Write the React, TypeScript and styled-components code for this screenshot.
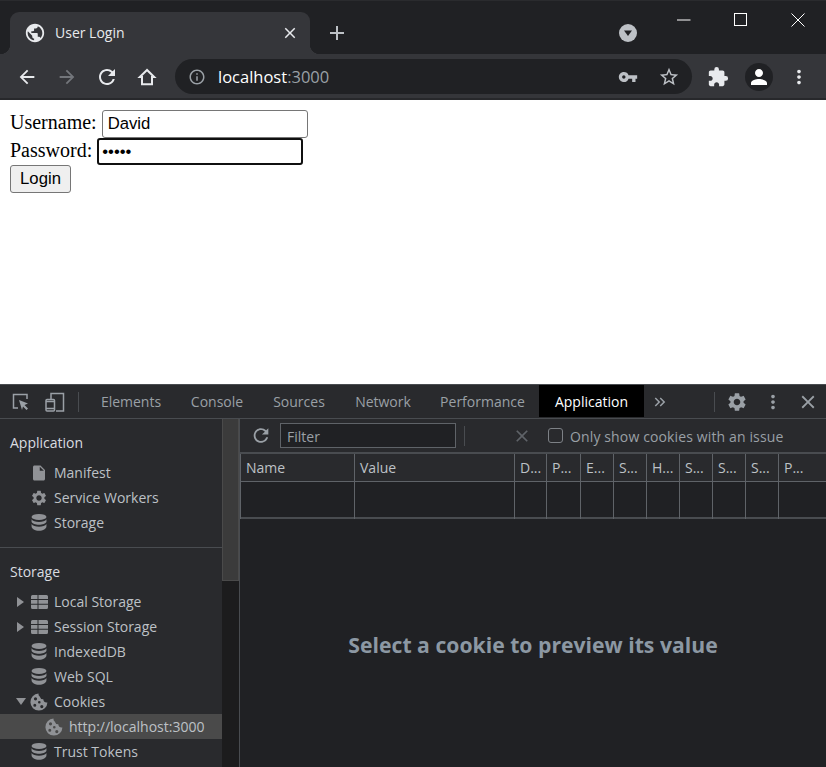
import React from "react";
import styled, { createGlobalStyle } from "styled-components";
import {
  MdArrowBack, MdArrowForward, MdRefresh, MdInfoOutline, MdVpnKey, MdStarBorder,
  MdExtension, MdPerson, MdMoreVert, MdClose, MdAdd, MdPublic, MdSettings, MdInsertDriveFile,
  MdKeyboardDoubleArrowRight,
} from "react-icons/md";

const UI = `"Open Sans", "Noto Sans", sans-serif`;

const Global = createGlobalStyle`
  html, body { margin: 0; padding: 0; height: 100%; overflow: hidden; background: #fff; }
  * { box-sizing: border-box; }
`;

const Shell = styled.div`display: flex; flex-direction: column; width: 826px; height: 767px; overflow: hidden;`;

/* Browser chrome */
const TabStrip = styled.div`display: flex; align-items: flex-end; height: 54px; padding-left: 10px; background: #202124; border-top: 1px solid #2a2b2e;`;
const Tab = styled.div`
  position: relative; display: flex; flex: none; align-items: center; width: 300px; height: 42px; padding: 0 11px 0 14px;
  background: #35363a; border-radius: 9px 9px 0 0; color: #e8eaed; font: 14px ${UI};
  &::before, &::after { content: ""; position: absolute; bottom: 0; width: 10px; height: 10px; }
  &::before { left: -10px; background: radial-gradient(circle at 0 0, transparent 10px, #35363a 10.5px); }
  &::after { right: -10px; background: radial-gradient(circle at 100% 0, transparent 10px, #35363a 10.5px); }
`;
const TabTitle = styled.span`flex: 1; margin-left: 9px; margin-bottom: 1px;`;
const StripButton = styled.div`display: flex; flex: none; align-items: center; justify-content: center; height: 42px; width: ${p => p.$w}px; margin-left: ${p => p.$ml || 0}px; color: ${p => p.$c || "#bdc1c6"};`;
const WindowControls = styled.div`display: flex; flex: none; align-self: flex-start; margin-left: 9px; height: 38px;`;
const WindowButton = styled.div`display: flex; align-items: center; justify-content: center; width: 57px; height: 38px; color: #fff;`;

const Toolbar = styled.div`display: flex; align-items: center; height: 46px; padding: 1px 7px 0; background: #35363a; border-bottom: 2px solid #27282b;`;
const NavSlot = styled.div`display: flex; align-items: center; justify-content: center; flex: none; width: ${p => p.$w || 40}px; margin-left: ${p => p.$ml || 0}px; color: ${p => p.$c || "#e8eaed"};`;
const Omnibox = styled.div`display: flex; align-items: center; width: 517px; height: 35px; margin-left: 8px; padding-left: 12px; background: #202124; border-radius: 18px; font: 16.5px ${UI};`;
const Url = styled.span`margin-left: 11px; flex: 1; color: #fff;`;
const UrlPort = styled.span`color: #9aa0a6;`;
const Avatar = styled.div`display: flex; align-items: center; justify-content: center; width: 28px; height: 28px; border-radius: 50%; background: #202124; color: #fff;`;

/* Page */
const Page = styled.form`height: 284px; flex: none; padding: 10px; background: #fff; color: #000; font: 20px/25px "Liberation Serif", serif;`;
const Field = styled.div`height: ${p => p.$h}px; white-space: nowrap;`;
const TextInput = styled.input`
  width: 206px; height: 28px; margin: 0; padding: 1px 4px 1px 5px; vertical-align: top; color: #000; background: #fff;
  font: 16.7px "Liberation Sans", sans-serif; border: 1px solid #767676; border-radius: 3px; outline: none;
`;
const PasswordInput = styled(TextInput)`height: 27px; border: 2px solid #101010; padding: 1px 3px; font-size: 16.7px;`;
const LoginButton = styled.button`
  display: block; width: 61px; height: 28px; padding: 0; background: #efefef; color: #000; font: 16.7px "Liberation Sans", sans-serif;
  border: 1px solid #767676; border-radius: 3px;
`;

/* DevTools */
const DevTools = styled.div`display: flex; flex: 1; flex-direction: column; min-height: 0; background: #202124; font: 14px ${UI}; color: #bdc1c6; border-top: 1px solid #494c50;`;
const DevBar = styled.div`display: flex; align-items: stretch; flex: none; height: 34px; padding-left: 4px; background: #292a2d; border-bottom: 1px solid #494c50;`;
const DevSlot = styled.div`display: flex; align-items: center; justify-content: center; flex: none; width: ${p => p.$w || 34}px; margin-left: ${p => p.$ml || 0}px; color: ${p => p.$c || "#9aa0a6"};`;
const Separator = styled.div`flex: none; width: 1px; height: 20px; align-self: center; margin-left: ${p => p.$ml}px; background: #494c50;`;
const DevTabs = styled.div`display: flex; margin-left: 7px;`;
const DevTab = styled.div`
  display: flex; align-items: center; justify-content: center; width: ${p => p.$w}px; margin-bottom: 1px;
  color: ${p => (p.$active ? "#fff" : "#9aa0a6")}; background: ${p => (p.$active ? "#000" : "transparent")};
`;
const DevBody = styled.div`display: flex; flex: 1; min-height: 0;`;
const Sidebar = styled.div`flex: none; width: 222px; background: #292a2d; overflow: hidden; padding-top: 11px;`;
const SideHeading = styled.div`height: 25px; padding-left: 10px; line-height: 25px; color: #dadce0;`;
const Divider = styled.div`height: 1px; margin: 12px 0 11px; background: #494c50;`;
const TreeRow = styled.div`
  display: flex; align-items: center; height: 25px; padding-left: ${p => p.$indent}px; color: #bdc1c6;
  background: ${p => (p.$selected ? "#4a4a4a" : "transparent")};
`;
const TreeArrow = styled.div`flex: none; width: 0; height: 0; margin: 0 ${p => p.$mr}px 0 ${p => p.$ml}px;
  ${p => p.$open
    ? "border-left: 5px solid transparent; border-right: 5px solid transparent; border-top: 7px solid #909296;"
    : "border-top: 5px solid transparent; border-bottom: 5px solid transparent; border-left: 7px solid #909296;"}
`;
const TreeIcon = styled.div`display: flex; align-items: center; justify-content: center; flex: none; width: 18px; height: 18px; color: #909296;`;
const TreeLabel = styled.span`margin-left: 6px; white-space: nowrap; margin-top: -1px;`;
const TreeGroup = styled.div`margin-top: 5px;`;
const Track = styled.div`flex: none; width: 18px; background: #1c1c1d; border-right: 1px solid #494c50;`;
const Thumb = styled.div`height: 162px; background: #3b3b3b; border: 1px solid #4a4a4a; border-top: none;`;
const Main = styled.div`display: flex; flex: 1; flex-direction: column; min-width: 0;`;
const CookieBar = styled.div`display: flex; align-items: center; flex: none; height: 35px; padding-left: 10px; background: #292a2d; border-bottom: 2px solid #494c50;`;
const FilterBox = styled.div`flex: none; width: 176px; height: 25px; margin-left: 8px; padding-left: 6px; line-height: 25px; color: #9aa0a6; background: #202124; border: 1px solid #5f6368;`;
const Checkbox = styled.div`flex: none; width: 15px; height: 15px; margin-left: 16px; border: 1px solid #7d8186; border-radius: 3px; background: #292a2d;`;
const CheckLabel = styled.span`margin-left: 7px; margin-top: 1px; color: #9aa0a6; white-space: nowrap; letter-spacing: .13px;`;
const Grid = styled.div`
  display: grid; flex: none; height: 65px; grid-template-columns: 114px 160px 32px 34px 33px 33px 33px 33px 33px 33px 1fr;
  grid-template-rows: 28px 37px; border-bottom: 2px solid #494c50;
`;
const HeadCell = styled.div`height: 28px; padding-left: 5px; line-height: 28px; background: #292a2d; color: #bdc1c6; border-left: 1px solid #5f6368; border-bottom: 1px solid #5f6368; white-space: nowrap;`;
const BodyCell = styled.div`border-left: 1px solid #5f6368;`;
const Empty = styled.div`display: flex; flex: 1; align-items: center; justify-content: center; padding-top: 2px; font: 700 21.2px ${UI}; color: #8c98a3;`;

const Database = () => (
  <svg width="16" height="17" viewBox="0 0 15 16" fill="currentColor">
    <ellipse cx="7.5" cy="2.8" rx="7" ry="2.8" />
    <path d="M.5 5c1 1.7 3.8 2.6 7 2.6S13.500 6.700 14.500 5v2.300c-.6 1.700-3.600 2.900-7 2.900S1.100 9 .5 7.300z" />
    <path d="M.5 9.500c1 1.700 3.800 2.600 7 2.600s6-.9 7-2.600v2c0 2.500-3.200 4.300-7 4.300s-7-1.800-7-4.300z" />
  </svg>
);
const TableIcon = () => (
  <svg width="17" height="14" viewBox="0 0 17 14" fill="currentColor">
    <path d="M0 1.500A1.500 1.500 0 0 1 1.500 0h5v4H0zM7.500 0H15.500A1.500 1.500 0 0 1 17 1.500V4H7.500zM0 5h6.500v3.800H0zM7.500 5H17v3.800H7.500zM0 9.800h6.500V14h-5A1.500 1.500 0 0 1 0 12.500zM7.500 9.800H17v2.700a1.500 1.500 0 0 1-1.500 1.500h-8z" />
  </svg>
);
const CookieIcon = () => (
  <svg width="18" height="18" viewBox="0 0 18 18" fill="currentColor">
    <path
      fillRule="evenodd"
      d="M8.500.6A8.500 8.500 0 1 0 17.400 9.400 3.600 3.600 0 0 1 13.300 6.300 3.600 3.600 0 0 1 9.700 3.600 3 3 0 0 1 8.500.6ZM5.500 4.200a1.600 1.600 0 1 0 0 3.200 1.600 1.600 0 0 0 0-3.200ZM9.300 8a1.300 1.300 0 1 0 0 2.600 1.300 1.300 0 0 0 0-2.600ZM4.800 10.800a1.500 1.500 0 1 0 0 3 1.500 1.500 0 0 0 0-3ZM11.800 12a1.600 1.600 0 1 0 0 3.200 1.600 1.600 0 0 0 0-3.200Z"
    />
  </svg>
);
const HomeIcon = () => (
  <svg width="20" height="20" viewBox="0 0 20 20" fill="none" stroke="currentColor" strokeWidth="2">
    <path d="M10 3 2.800 10H5v7.200h10V10h2.200z" />
  </svg>
);
const InspectIcon = () => (
  <svg width="20" height="20" viewBox="0 0 20 20" fill="none" stroke="currentColor" strokeWidth="1.500">
    <path d="M7 16H2.500V2.500H16V7" />
    <path d="M8 8l9 3.500-3.500 1.500 3.500 3.500-1.500 1.500-3.500-3.500-1 3.500z" fill="currentColor" stroke="none" />
  </svg>
);
const DeviceIcon = () => (
  <svg width="20" height="20" viewBox="0 0 20 20" fill="none" stroke="currentColor" strokeWidth="1.500">
    <path d="M6 7V1.500h12.500V19H11" />
    <rect x="1" y="7.500" width="8.500" height="11.500" rx="1" />
    <path d="M1 9.500h8.500M1 16.500h8.500" />
  </svg>
);
const Minimize = () => <svg width="14" height="2" viewBox="0 0 14 2"><path d="M0 1h13.500" stroke="currentColor" /></svg>;
const Maximize = () => <svg width="14" height="14" viewBox="0 0 14 14"><rect x=".5" y=".5" width="12" height="12" fill="none" stroke="currentColor" /></svg>;
const WinClose = () => <svg width="14" height="14" viewBox="0 0 14 14"><path d="M.5.500l13 13M13.500.500l-13 13" stroke="currentColor" /></svg>;
const TabSearch = () => (
  <svg width="18" height="18" viewBox="0 0 18 18"><circle cx="9" cy="9" r="9" fill="#bdc1c6" /><path d="M5 6.500h8L9 12z" fill="#202124" /></svg>
);

const headers = ["Name", "Value", "D...", "P...", "E...", "S...", "H...", "S...", "S...", "S...", "P..."];
const tabs: [string, number][] = [["Elements", 90], ["Console", 82], ["Sources", 82], ["Network", 86], ["Performance", 113]];

export default function App() {
  return (
    <Shell>
      <Global />
      <TabStrip>
        <Tab>
          <MdPublic size={22} />
          <TabTitle>User Login</TabTitle>
          <MdClose size={18} color="#e8eaed" />
        </Tab>
        <StripButton $w={54}><MdAdd size={24} /></StripButton>
        <StripButton $w={36} $ml={246}><TabSearch /></StripButton>
        <WindowControls>
          <WindowButton><Minimize /></WindowButton>
          <WindowButton><Maximize /></WindowButton>
          <WindowButton><WinClose /></WindowButton>
        </WindowControls>
      </TabStrip>
      <Toolbar>
        <NavSlot><MdArrowBack size={22} /></NavSlot>
        <NavSlot $c="#73767b"><MdArrowForward size={22} /></NavSlot>
        <NavSlot><MdRefresh size={24} /></NavSlot>
        <NavSlot><HomeIcon /></NavSlot>
        <Omnibox>
          <NavSlot $w={20} $c="#9aa0a6"><MdInfoOutline size={18} /></NavSlot>
          <Url>localhost<UrlPort>:3000</UrlPort></Url>
          <NavSlot $w={20} $c="#bdc1c6"><MdVpnKey size={20} /></NavSlot>
          <NavSlot $w={24} $ml={19} $c="#bdc1c6"><MdStarBorder size={22} /></NavSlot>
          <NavSlot $w={11} />
        </Omnibox>
        <NavSlot $ml={6}><MdExtension size={22} /></NavSlot>
        <NavSlot $ml={1}><Avatar><MdPerson size={24} /></Avatar></NavSlot>
        <NavSlot><MdMoreVert size={22} /></NavSlot>
      </Toolbar>
      <Page>
        <Field $h={28}>Username: <TextInput defaultValue="David" /></Field>
        <Field $h={27}>Password: <PasswordInput type="password" defaultValue="12345" /></Field>
        <LoginButton type="button">Login</LoginButton>
      </Page>
      <DevTools>
        <DevBar>
          <DevSlot><InspectIcon /></DevSlot>
          <DevSlot $w={33}><DeviceIcon /></DevSlot>
          <Separator $ml={7} />
          <DevTabs>
            {tabs.map(([t, w]) => <DevTab key={t} $w={w}>{t}</DevTab>)}
            <DevTab $w={105} $active>Application</DevTab>
          </DevTabs>
          <DevSlot $w={32}><MdKeyboardDoubleArrowRight size={18} /></DevSlot>
          <Separator $ml={38} />
          <DevSlot $ml={5}><MdSettings size={22} /></DevSlot>
          <DevSlot $ml={2}><MdMoreVert size={22} /></DevSlot>
          <DevSlot $ml={1}><MdClose size={22} /></DevSlot>
        </DevBar>
        <DevBody>
          <Sidebar>
            <SideHeading>Application</SideHeading>
            <TreeGroup>
              <TreeRow $indent={30}><TreeIcon><MdInsertDriveFile size={22} /></TreeIcon><TreeLabel>Manifest</TreeLabel></TreeRow>
              <TreeRow $indent={30}><TreeIcon><MdSettings size={22} /></TreeIcon><TreeLabel>Service Workers</TreeLabel></TreeRow>
              <TreeRow $indent={30}><TreeIcon><Database /></TreeIcon><TreeLabel>Storage</TreeLabel></TreeRow>
            </TreeGroup>
            <Divider />
            <SideHeading>Storage</SideHeading>
            <TreeGroup>
              <TreeRow $indent={0}><TreeArrow $ml={17} $mr={6} /><TreeIcon><TableIcon /></TreeIcon><TreeLabel>Local Storage</TreeLabel></TreeRow>
              <TreeRow $indent={0}><TreeArrow $ml={17} $mr={6} /><TreeIcon><TableIcon /></TreeIcon><TreeLabel>Session Storage</TreeLabel></TreeRow>
              <TreeRow $indent={30}><TreeIcon><Database /></TreeIcon><TreeLabel>IndexedDB</TreeLabel></TreeRow>
              <TreeRow $indent={30}><TreeIcon><Database /></TreeIcon><TreeLabel>Web SQL</TreeLabel></TreeRow>
              <TreeRow $indent={0}><TreeArrow $ml={16} $mr={4} $open /><TreeIcon><CookieIcon /></TreeIcon><TreeLabel>Cookies</TreeLabel></TreeRow>
              <TreeRow $indent={45} $selected><TreeIcon><CookieIcon /></TreeIcon><TreeLabel>http://localhost:3000</TreeLabel></TreeRow>
              <TreeRow $indent={30}><TreeIcon><Database /></TreeIcon><TreeLabel>Trust Tokens</TreeLabel></TreeRow>
            </TreeGroup>
          </Sidebar>
          <Track><Thumb /></Track>
          <Main>
            <CookieBar>
              <DevSlot $w={22}><MdRefresh size={23} /></DevSlot>
              <FilterBox>Filter</FilterBox>
              <Separator $ml={8} />
              <DevSlot $w={20} $ml={47} $c="#5f6368"><MdClose size={22} /></DevSlot>
              <Checkbox />
              <CheckLabel>Only show cookies with an issue</CheckLabel>
            </CookieBar>
            <Grid>
              {headers.map((h, i) => <HeadCell key={i}>{h}</HeadCell>)}
              {headers.map((_, i) => <BodyCell key={i} />)}
            </Grid>
            <Empty>Select a cookie to preview its value</Empty>
          </Main>
        </DevBody>
      </DevTools>
    </Shell>
  );
}
